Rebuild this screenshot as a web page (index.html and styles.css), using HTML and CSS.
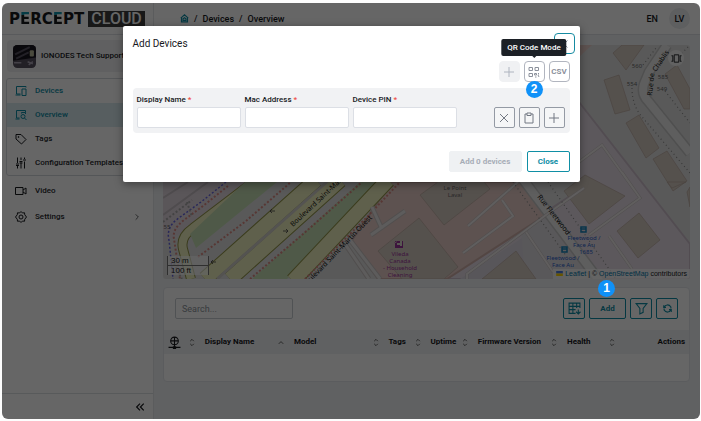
FILE: index.html
```html
<!DOCTYPE html>
<html lang="en">
<head>
<meta charset="utf-8">
<title>Percept Cloud - Devices</title>
<link rel="stylesheet" href="styles.css">
</head>
<body>
<div class="app">
  <aside class="sidebar">
    <div class="logo"><span class="logo-name">P<span class="accent">E</span>RC<span class="accent">E</span>PT</span><span class="logo-box">CLOUD</span></div>
    <div class="account">
      <svg class="avatar" viewBox="0 0 22 22"><rect width="22" height="22" rx="4" fill="#56505f"/><path d="M0 4a4 4 0 0 1 4-4h14a4 4 0 0 1 4 4v8L0 15z" fill="#18151f"/><path d="M2 9l14-7M3 13l12-6" stroke="#55505f"/><rect x="16" y="5" width="4" height="6" rx="1" fill="#b9b89a"/><path d="M1 17h7M14 16l5 2M15 19l4-3" stroke="#aaa4b4" stroke-width="1.5"/></svg>
      <span>IONODES Tech Support</span>
    </div>
    <nav>
      <div class="nav-group">
        <a class="nav-item teal" href="#"><svg viewBox="0 0 24 24"><path d="M22 5V3H3v15h8M1 20h10M14 8h8v13h-8z"/></svg>Devices</a>
        <a class="nav-item teal current" href="#"><svg viewBox="0 0 24 24"><path d="M21 7V3H3v15h6M1 20h8M13 9V7h8v3"/><circle cx="16" cy="15" r="4"/><path d="M19 18l4 4"/></svg>Overview</a>
        <a class="nav-item" href="#"><svg viewBox="0 0 24 24"><path d="M2 3h10l10 10-9 9L2 12z"/><circle cx="7" cy="8" r="1"/></svg>Tags</a>
        <a class="nav-item" href="#"><svg viewBox="0 0 24 24"><path d="M5 1v11M5 17v6M12 1v5M12 11v12M19 1v3M19 9v14M2 14h6M9 9h6M16 6h6M2 17h6M9 12h6"/></svg>Configuration Templates</a>
      </div>
      <a class="nav-item" href="#"><svg viewBox="0 0 24 24"><path d="M1 5h15v14H1zM16 10l6-4v12l-6-4"/></svg>Video</a>
      <a class="nav-item" href="#"><svg viewBox="0 0 24 24"><path d="M12 1l3 3 4-.5.5 4 3.500 4.500-3.500 4.500-.5 4-4-.5-3 3-3-3-4 .5-.5-4L1 12l3.500-4.500.5-4 4 .5z"/><circle cx="12" cy="12" r="4"/></svg>Settings<svg class="chevron" viewBox="0 0 24 24"><path d="M8 4l8 8-8 8"/></svg></a>
    </nav>
    <div class="sidebar-foot"><button class="plain" aria-label="Collapse"><svg viewBox="0 0 24 24"><path d="M12 4l-8 8 8 8M21 4l-8 8 8 8"/></svg></button></div>
  </aside>

  <div class="content">
    <header class="topbar">
      <div class="crumbs">
        <a href="#" aria-label="Home"><svg viewBox="0 0 24 24"><path d="M2 11L12 2l10 9M4 10v11h16V10M8 17v-4l4-3 4 3v4z"/></svg></a>
        <span>/</span><a href="#">Devices</a><span>/</span><a href="#">Overview</a>
      </div>
      <div class="user"><span>EN</span><span class="initials">LV</span></div>
    </header>
    <main>
      <div class="map">
        <svg class="map-art" viewBox="163 45 527 234" preserveAspectRatio="xMidYMid slice">
          <rect x="163" y="45" width="527" height="234" fill="#dfdfdf"/>
          <path d="M163 45h120l-20 137-100 62z" fill="#e2d6df"/>
          <path d="M163 198l25-16M163 215l45-33" stroke="#c5bdc3" fill="none"/>
          <path d="M579 102L690 244v35H445l134-89z" fill="#e6dce6" stroke="#cdbfcb"/>
          <path d="M460 279l95-63 45 63z" fill="#dcd8e2"/>
          <path d="M520 215l20-13 55 77h-70z" fill="#dfdbe0"/>
          <path d="M352 240l40-58h128l26 33-99 64h-69z" fill="#e8cdc7" stroke="#cfafa9"/>
          <path d="M579 45h13l-13 12z" fill="#e8cdc7"/>
          <g fill="none">
            <path d="M256 180l-63 48q-13 9-10 21l8 30" class="casing"/>
            <path d="M256 180l-63 48q-13 9-10 21l8 30" class="road"/>
          </g>
          <path d="M190 234l55-52h32l-81 66zM252 279l108-97h23l-96 97z" fill="#c5deb4"/>
          <g fill="none">
            <path d="M205 279l111-99M230 279l110-99M293 281l95-101" class="casing wide"/>
            <path d="M205 279l111-99M230 279l110-99M293 281l95-101" class="road wide"/>
            <path d="M217 279l112-99" stroke="#d1cfca" stroke-width="3"/>
            <path d="M198 257l48-36 45-39M250 279l52-44 60-53M305 279l62-62 33-35" class="foot"/>
            <path d="M226 182l-25 20-25 18q-10 9-7 20l4 39" stroke="#6464df" stroke-width="1.500" stroke-dasharray="2 2"/>
            <path d="M228 186l-25 20-19 14q-12 9-10 19l6 40" class="foot"/>
            <path d="M163 222l29-22M172 260l10 19M187 202l5 15" stroke="#a9a9a9" stroke-dasharray="2 2"/>
            <path d="M345 244l24 35M350 240l30 39M372 207l10 22M371 235l34-24" stroke="#c9c3c2" stroke-width="5"/>
            <path d="M345 244l24 35M350 240l30 39M372 207l10 22M371 235l34-24" stroke="#e9e6e5" stroke-width="3"/>
          </g>
          <g fill="#d5cac1" stroke="#bcaaa0" stroke-width=".7">
            <path d="M378 251l41-33 39 49-14 12h-42zM420 195l18-13h46l6 7-46 36zM482 279l34-28 20 28zM564 191l21-16 40 21-36 28zM617 231l22-18 21 27-22 18zM667 182h19l-14 6zM604 80l15-5 11 35-15 4zM626 123l13-8 20 33-13 10zM653 159l14-8 20 30-14 10zM613 53l9-8h22l-18 25zM665 74l12-9 13 24v20h-6zM687 192l3-5v20z"/>
          </g>
          <g fill="none">
            <path d="M667 45l-18 27-5 12q-3 10 4 17l42 52M522 178l79 105" stroke="#c6c6c6" stroke-width="11"/>
            <path d="M667 45l-18 27-5 12q-3 10 4 17l42 52M522 178l79 105" stroke="#eaeaea" stroke-width="8"/>
            <path d="M468 226l50-44M463 253l50-37-11-16M467 279v-5l83-62 34-24M579 162l23-17 33 46M589 235l51-37-18-26M609 236l23 33M526 232l27 40" stroke="#c8c2c2" stroke-width="3"/>
            <path d="M468 226l50-44M463 253l50-37-11-16M467 279v-5l83-62 34-24M579 162l23-17 33 46M589 235l51-37-18-26M609 236l23 33M526 232l27 40" stroke="#efebeb"/>
            <path d="M632 88q0 18 11 30l47 55M643 65l13-17M665 91l25 32M676 59l14-14M548 182l68 97M513 182l54 75" stroke="#8d8d8d" stroke-width="1.200" stroke-dasharray="1 3"/>
          </g>
          <g fill="none" stroke="#444" stroke-width=".8"><path d="M275 211h-5M272 209l-2 2 2 2M283 231h5M286 229l2 2-2 2M216 262h-5M213 260l-2 2 2 2"/></g>
          <g class="street">
            <text transform="translate(293 227) rotate(-43)">Boulevard Saint-Martin Ouest</text>
            <text transform="translate(305 288) rotate(-46)">Boulevard Saint-Martin Ouest</text>
            <text transform="translate(537 197) rotate(52)">Rue Fleetwood</text>
            <text transform="translate(652 96) rotate(-84)">Rue de</text>
            <text transform="translate(656 72) rotate(-56)">Chablis</text>
          </g>
          <g class="place"><text x="455" y="190">Le Point</text><text x="455" y="197">Laval</text><text x="637" y="68">560</text><text x="632" y="86">554</text><text x="663" y="79">585</text><text x="662" y="91">549</text><text x="167" y="229">55</text></g>
          <path d="M395 241h8v7h-8zM394 243h2l1-2" fill="#993399"/><path d="M397 244h3M401 241v5" stroke="#ddc"/>
          <g class="place shop"><text x="400" y="256">Vileda</text><text x="400" y="263">Canada</text><text x="400" y="270">- Household</text><text x="400" y="277">Cleaning</text></g>
          <g fill="none" stroke="#1683ba" stroke-width="1.500"><path d="M581 227h5v5h-5zM581 229h5M562 247h5v5h-5zM562 249h5"/></g>
          <g class="place stop"><text x="584" y="240">Fleetwood /</text><text x="584" y="247">Face Au</text><text x="586" y="254">1685</text><text x="563" y="260">Fleetwood /</text><text x="563" y="267">Face Au</text></g>
        </svg>
        <div class="scale"><span>30 m</span><span>100 ft</span></div>
        <button class="map-tool" aria-label="Fit map"><svg viewBox="0 0 24 24"><path d="M7 4h10v16H7zM1 6h3v12H1M23 6h-3v12h3"/></svg></button>
        <div class="credit"><svg viewBox="0 0 8 6"><path d="M0 0h8v3H0z" fill="#4c7be1"/><path d="M0 3h8v3H0z" fill="#ffd500"/></svg><a href="#">Leaflet</a> | © <a href="#">OpenStreetMap</a> contributors</div>
      </div>
      <section class="card">
        <div class="tools">
          <input class="search" type="text" placeholder="Search..." aria-label="Search">
          <div class="tool-buttons">
            <button class="btn icon" aria-label="Columns"><svg viewBox="0 0 24 24"><path d="M22 11V2H2v19h12M2 8h20M9 2v19M2 14h12M16 2v9M19 14v8M15 18l4 4 4-4"/></svg></button>
            <div class="anchor"><button class="btn add">Add</button><span class="step step-one">1</span></div>
            <button class="btn icon" aria-label="Filter"><svg viewBox="0 0 24 24"><path d="M2 3h20l-7 9v7l-6 3V12z"/></svg></button>
            <button class="btn icon" aria-label="Refresh"><svg class="small" viewBox="0 0 24 24"><path d="M2 3v6h6M22 21v-6h-6M3 9c3-8 13-9 18-1v4M21 15c-3 8-13 9-18 1v-4"/></svg></button>
          </div>
        </div>
        <table>
          <colgroup><col class="w7"><col class="w17"><col class="w18"><col class="w8"><col class="w9"><col class="w17"><col class="w11"><col class="w13"></colgroup>
          <thead><tr>
            <th><div class="th"><svg class="globe" viewBox="0 0 24 24"><circle cx="12" cy="9" r="7"/><path d="M5 9h14M12 2v14M12 16v3M1 21h22M10 20h4v3h-4z"/></svg><svg class="sort" viewBox="0 0 12 20"><path d="M2 7l4-4 4 4M2 13l4 4 4-4"/></svg></div></th>
            <th><div class="th">Display Name<svg class="sort" viewBox="0 0 12 20"><path d="M1 13l5-5 5 5"/></svg></div></th>
            <th><div class="th">Model<svg class="sort" viewBox="0 0 12 20"><path d="M2 7l4-4 4 4M2 13l4 4 4-4"/></svg></div></th>
            <th><div class="th">Tags<svg class="sort" viewBox="0 0 12 20"><path d="M2 7l4-4 4 4M2 13l4 4 4-4"/></svg></div></th>
            <th><div class="th">Uptime<svg class="sort" viewBox="0 0 12 20"><path d="M2 7l4-4 4 4M2 13l4 4 4-4"/></svg></div></th>
            <th><div class="th">Firmware Version<svg class="sort" viewBox="0 0 12 20"><path d="M2 7l4-4 4 4M2 13l4 4 4-4"/></svg></div></th>
            <th><div class="th">Health<svg class="sort" viewBox="0 0 12 20"><path d="M2 7l4-4 4 4M2 13l4 4 4-4"/></svg></div></th>
            <th class="right">Actions</th>
          </tr></thead>
          <tbody><tr><td colspan="8"></td></tr></tbody>
        </table>
      </section>
    </main>
  </div>

  <div class="scrim">
    <div class="dialog" role="dialog" aria-labelledby="dialog-title">
      <div class="dialog-head"><h2 id="dialog-title">Add Devices</h2><button class="sq close" aria-label="Close dialog"><svg viewBox="0 0 24 24"><path d="M5 5l14 14M19 5L5 19"/></svg></button></div>
      <div class="modes">
        <button class="sq off" aria-label="Manual mode"><svg viewBox="0 0 24 24"><path d="M12 2v20M2 12h20"/></svg></button>
        <div class="anchor">
          <button class="sq" aria-label="QR Code Mode"><svg viewBox="0 0 24 24"><path d="M2 3h7v6H2zM14 3h7v6h-7zM2 15h7v6H2zM13 15h4v3h-4zM21 14v3M20 18l2 4M14 22h3"/></svg></button>
          <span class="tooltip" role="tooltip">QR Code Mode</span>
          <span class="step step-two">2</span>
        </div>
        <button class="sq csv">CSV</button>
      </div>
      <div class="device">
        <div class="fields">
          <label>Display Name <b>*</b><input type="text"></label>
          <label>Mac Address <b>*</b><input type="text"></label>
          <label>Device PIN <b>*</b><input type="text"></label>
        </div>
        <div class="row-actions">
          <button class="sq hard" aria-label="Remove"><svg viewBox="0 0 24 24"><path d="M4 4l16 16M20 4L4 20"/></svg></button>
          <button class="sq hard" aria-label="Paste"><svg viewBox="0 0 24 24"><path d="M8 4H4v18h16V4h-4M8 2h8v5H8z"/></svg></button>
          <button class="sq hard" aria-label="Add row"><svg viewBox="0 0 24 24"><path d="M12 2v20M2 12h20"/></svg></button>
        </div>
      </div>
      <div class="dialog-foot"><button class="submit" disabled>Add 0 devices</button><button class="cancel">Close</button></div>
    </div>
  </div>
</div>
</body>
</html>
```
FILE: styles.css
```css
* { box-sizing: border-box; }
body {
  margin: 0;
  padding: 3px 1px 2px 2px;
  background: #fdfdfd;
  font: 500 8px/12px Roboto, sans-serif;
  color: #17191d;
}
a { color: inherit; text-decoration: none; }
button, input { font: inherit; margin: 0; }
button { padding: 0; display: flex; align-items: center; justify-content: center; }
svg { display: block; fill: none; stroke: currentColor; stroke-width: 2; flex: none; }

.app {
  position: relative;
  display: flex;
  min-height: calc(100vh - 5px);
  border-radius: 6px;
  overflow: hidden;
  background: #f0f2f5;
}

/* Sidebar */
.sidebar { flex: 0 0 152px; display: flex; flex-direction: column; background: #fff; border-right: 1px solid #e3e5e8; }
.logo { display: flex; align-items: center; gap: 4px; height: 32px; padding-left: 7px; border-bottom: 1px solid #dfe2e5; }
.logo-name { font: bold 15px/16px "DejaVu Sans", sans-serif; }
.accent { color: transparent; background: linear-gradient(#1095ac 5px, #17191d 5px); background-clip: text; -webkit-background-clip: text; }
.logo-box { background: #3c3c3c; color: #fff; font: 500 16px/16px Roboto, sans-serif; padding: 0 3px; }
.account { display: flex; align-items: center; gap: 5px; margin: 5px 4px 6px 5px; height: 32px; padding: 0 6px; background: #f0f1f3; border-radius: 4px; white-space: nowrap; overflow: hidden; }
.avatar { width: 23px; height: 23px; stroke: none; }
.nav-group { margin: 0 5px 3px 4px; border: 1px solid #d3d7dc; border-radius: 3px; }
.nav-group .nav-item { padding-left: 8px; }
.nav-item { display: flex; align-items: center; gap: 8px; height: 24px; padding-left: 13px; white-space: nowrap; overflow: hidden; color: #26282d; margin-bottom: 2px; }
.nav-group .nav-item { margin: 0; }
.nav-item svg { width: 12px; height: 12px; color: #17191d; }
.teal, .nav-item.teal, .nav-item.teal svg { color: #0e8da5; }
.nav-item.current { background: #d9eaef; }
.nav-item .chevron { width: 8px; height: 8px; margin: 0 12px 0 auto; }
.sidebar-foot { margin-top: auto; height: 26px; border-top: 1px solid #dde0e3; display: flex; align-items: center; justify-content: flex-end; padding-right: 8px; }
.plain { border: 0; background: none; color: inherit; }
.plain svg { width: 10px; height: 10px; stroke-width: 3; }

/* Content */
.content { flex: 1; min-width: 0; }
.topbar { display: flex; align-items: center; justify-content: space-between; height: 32px; padding: 0 10px 0 26px; background: #fff; border-bottom: 1px solid #dfe2e5; }
.crumbs { display: flex; align-items: center; gap: 5px; font-size: 9px; }
.crumbs svg { width: 9px; height: 9px; color: #0e8da5; stroke-width: 3; }
.user { display: flex; align-items: center; gap: 11px; font-size: 9px; }
.initials { width: 21px; height: 21px; border-radius: 50%; background: #ebedef; display: grid; place-items: center; }
main { padding: 10px 10px 10px 9px; }
.map { position: relative; height: 234px; border-radius: 3px; overflow: hidden; margin-bottom: 8px; }
.map-art { width: 100%; height: 100%; stroke: none; }
.casing { stroke: #93964b; stroke-width: 10; }
.road { stroke: #eef0bd; stroke-width: 8; }
.casing.wide { stroke-width: 16; }
.road.wide { stroke-width: 14; }
.foot { stroke: #d98b83; stroke-dasharray: 2 2; }
.street { font: 400 7px "Noto Sans", sans-serif; fill: #111; }
.place { font: 400 6px "Noto Sans", sans-serif; fill: #666; text-anchor: middle; }
.shop { fill: #993399; }
.stop { fill: #2860c8; }
.scale { position: absolute; left: 4px; bottom: 4px; width: 42px; font: 400 8px/9px "Liberation Sans", sans-serif; }
.scale span { display: block; padding-left: 3px; background: #ffffff99; border: 1px solid #777; border-top: 0; }
.scale span + span { border: 1px solid #777; border-width: 0 1px; }
.map-tool { position: absolute; top: 5px; right: 6px; width: 16px; height: 16px; border: 0; border-radius: 50%; background: #f5f5f5; color: inherit; }
.map-tool svg { width: 11px; height: 11px; }
.credit { position: absolute; right: 0; bottom: 0; padding: 0 3px; background: #ffffffb0; font: 400 7px/10px "Liberation Sans", sans-serif; white-space: nowrap; }
.credit a { color: #0078a8; }
.credit svg { display: inline-block; width: 7px; height: 5px; stroke: none; margin-right: 2px; }
.card { background: #fff; border: 1px solid #e3e6ea; border-radius: 4px; }
.tools { display: flex; justify-content: space-between; padding: 10px 11px 11px; }
.search { width: 118px; height: 21px; border: 1px solid #c9cdd2; border-radius: 2px; padding: 0 6px; background: #fff; font-weight: 400; font-size: 9px; }
.search::placeholder { color: #8d939b; }
.tool-buttons { display: flex; gap: 4px; }
.btn { height: 21px; border: 1px solid #0e8da5; border-radius: 2px; background: #fff; color: #0e8da5; }
.icon { width: 22px; }
.add { width: 37px; font-weight: 700; }
.btn svg { width: 13px; height: 13px; stroke-width: 2; }
.btn svg.small { width: 9px; height: 9px; stroke-width: 3; }
.anchor { position: relative; }
table { width: 100%; table-layout: fixed; border-collapse: collapse; }
th { height: 24px; padding: 0 4px; background: #f0f2f4; text-align: left; font-weight: 700; white-space: nowrap; }
td { height: 27px; padding: 0; }
.th { display: flex; align-items: center; justify-content: space-between; padding-right: 2px; }
.right { text-align: right; }
.sort { width: 6px; height: 9px; color: #555; }
.globe { width: 13px; height: 13px; }
.w7 { width: 7%; } .w8 { width: 8%; } .w9 { width: 9%; } .w11 { width: 11%; }
.w13 { width: 13%; } .w17 { width: 17%; } .w18 { width: 18%; }

/* Dialog */
.scrim { position: absolute; inset: 0; z-index: 2; background: rgba(0, 0, 0, .6); display: flex; justify-content: center; align-items: flex-start; padding: 23px 17px; }
.dialog { width: 457px; max-width: 100%; background: #fff; border-radius: 2px; padding: 7px 10px; box-shadow: 0 2px 8px #0006; }
.dialog-head { display: flex; align-items: center; justify-content: space-between; height: 21px; margin-right: -5px; }
h2 { margin: 0; font: 400 10px/12px Roboto, sans-serif; }
.sq { width: 21px; height: 21px; border: 1px solid #b1b5bf; border-radius: 4px; background: #fff; color: #8b909b; }
.sq svg { width: 12px; height: 12px; }
.close { border-color: #168ba2; }
.modes { display: flex; justify-content: flex-end; gap: 4px; margin: 7px 0 6px; }
.off { background: #f0f1f3; border-color: #f0f1f3; color: #aeb4bf; }
.csv { font-weight: 700; }
.tooltip { position: absolute; z-index: 1; bottom: 26px; left: 50%; transform: translateX(-50%); background: #1c2026; color: #fff; border-radius: 2px; padding: 3px 6px; line-height: 11px; white-space: nowrap; }
.tooltip::after { content: ""; position: absolute; top: 100%; left: 50%; margin-left: -2px; border: 2px solid transparent; border-top-color: #1c2026; }
.step { position: absolute; z-index: 3; width: 17px; height: 17px; border-radius: 50%; background: #0f91f8; color: #fff; font: 700 12px/17px "Liberation Sans", sans-serif; text-align: center; }
.step-one { left: 9px; top: -18px; }
.step-two { left: 2px; top: 20px; }
.device { display: flex; justify-content: space-between; align-items: flex-end; padding: 6px 5px 5px 4px; background: #f1f2f4; border-radius: 4px; }
.fields { display: flex; gap: 4px; }
label b { color: #f0483e; font-weight: 500; }
label input { display: block; width: 104px; height: 21px; margin-top: 1px; border: 1px solid #dcdfe5; border-radius: 2px; background: #fff; padding: 0 4px; }
.row-actions { display: flex; gap: 4px; }
.hard { border-color: #949aa4; border-radius: 2px; background: #f5f6f7; color: #737983; }
.dialog-foot { display: flex; justify-content: flex-end; gap: 5px; margin: 18px 0 3px; }
.dialog-foot button { height: 21px; border: 1px solid #0f8fa5; border-radius: 2px; background: #fff; color: #0e8da5; font-weight: 700; }
.dialog-foot .submit { width: 73px; border-color: #eff1f3; background: #eff1f3; color: #a7adb7; }
.dialog-foot .cancel { width: 43px; }
```
